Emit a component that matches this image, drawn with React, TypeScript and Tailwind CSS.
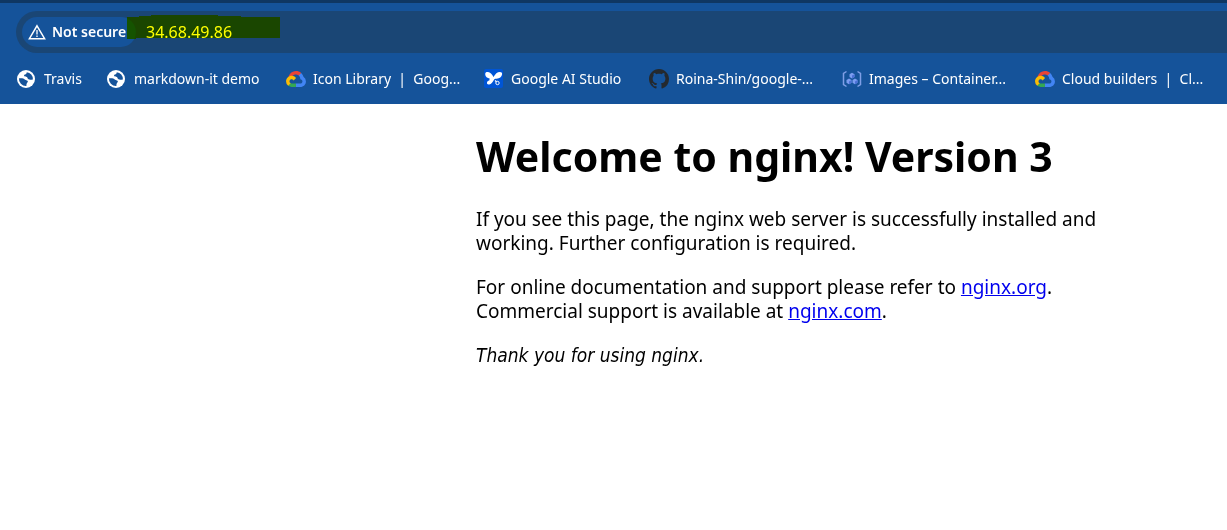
import type { ReactNode } from "react";

function GlobeIcon() {
  return (
    <svg viewBox="0 0 18 18" className="size-[18px] shrink-0" aria-hidden="true">
      <circle cx="9" cy="9" r="9" fill="#fff" />
      <path
        d="M2 8.2c1.6-.1 3.3-.1 4.2.3 1.500.7 2.200 1.700 3.600 1.900 1 .2 1.300.8.9 1.700-.3.700-1.400 1.100-1.300 3.900A7 7 0 0 1 2 8.200Z"
        fill="#15539a"
      />
      <path
        d="M9.800 2.200c-.2 1.300-.6 1.900-1.800 2.200-1 .2-1.200 1-.7 1.700.600.800 1.700.500 2.500 1 .900.600.700 1.700 1.700 2.200.9.500 2.400.400 4.400.100A7 7 0 0 0 9.800 2.200Z"
        fill="#15539a"
      />
    </svg>
  );
}

function CloudIcon() {
  return (
    <svg viewBox="0 0 256 206" className="h-4 w-5 shrink-0" aria-hidden="true">
      <path
        fill="#EA4335"
        d="m170.252 56.819 22.253-22.253 1.483-9.370C153.437-11.677 88.976-7.496 52.420 33.920 42.267 45.423 34.734 59.764 30.717 74.573l7.970-1.123 44.505-7.340 3.436-3.513c19.797-21.742 53.270-24.667 76.128-6.168l7.496.390Z"
      />
      <path
        fill="#4285F4"
        d="M224.205 73.918a100.249 100.249 0 0 0-30.217-48.722l-31.232 31.232a55.515 55.515 0 0 1 20.379 44.037v5.544c15.350 0 27.797 12.450 27.797 27.796 0 15.352-12.446 27.573-27.797 27.573h-55.671l-5.466 5.934v33.340l5.466 5.231h55.670c39.930.311 72.553-31.494 72.864-71.424a72.303 72.303 0 0 0-31.793-60.541"
      />
      <path
        fill="#34A853"
        d="M71.870 205.796h55.593V161.290H71.870a27.275 27.275 0 0 1-11.498-2.498l-7.887 2.420-22.409 22.253-1.952 7.574c12.567 9.489 27.996 14.825 43.746 14.757"
      />
      <path
        fill="#FBBC05"
        d="M71.870 61.425C31.940 61.664-.237 94.228.001 134.158a72.301 72.301 0 0 0 28.222 56.880l32.248-32.246c-13.990-6.322-20.208-22.786-13.887-36.776 6.320-13.990 22.786-20.208 36.775-13.888a27.796 27.796 0 0 1 13.887 13.888l32.248-32.248A72.224 72.224 0 0 0 71.870 61.425"
      />
    </svg>
  );
}

function StudioIcon() {
  return (
    <svg viewBox="0 0 19 19" className="size-[19px] shrink-0" aria-hidden="true">
      <rect width="19" height="19" rx="2" fill="#0055d6" />
      <path
        d="M1.200 5.200C1.100 3.400 2.500 2.900 4 3.100c2.200.300 4 2 5.500 4.900 1.800-3.100 3.800-5 6.400-5 1.500 0 2.400.900 2.200 2.300-.300 2.700-2.800 4.500-5.700 4.400-1.700 0-2 .400-2.700 1.500-1.300 2.200-2.300 4-4.500 4.300-1.500.200-2.500-.600-2.200-1.900.300-1.400 1.600-2 2.800-2.500-.500-.4-.5-1-.1-1.600C3.300 9.200 1.300 7.800 1.200 5.200Z"
        fill="#fff"
      />
      <circle cx="13.500" cy="14" r="1.700" fill="none" stroke="#fff" strokeWidth="1" />
      <path d="m11 11.500 1.500 1.200" stroke="#fff" strokeWidth="1.200" />
    </svg>
  );
}

function GithubIcon() {
  return (
    <svg viewBox="0 0 16 16" className="size-5 shrink-0" aria-hidden="true">
      <path
        fill="#24292e"
        d="M8 0C3.580 0 0 3.580 0 8c0 3.540 2.290 6.530 5.470 7.590.4.070.55-.17.55-.38 0-.19-.01-.82-.01-1.490-2.010.37-2.530-.49-2.690-.94-.09-.23-.48-.94-.82-1.130-.28-.15-.68-.52-.01-.53.63-.01 1.080.58 1.230.82.72 1.210 1.870.87 2.330.66.07-.52.28-.87.51-1.070-1.780-.2-3.640-.89-3.640-3.950 0-.87.31-1.590.82-2.150-.08-.2-.36-1.020.08-2.120 0 0 .67-.21 2.200.82.64-.18 1.320-.27 2-.27s1.360.09 2 .27c1.530-1.040 2.200-.82 2.200-.82.44 1.100.16 1.920.08 2.120.51.56.82 1.270.82 2.150 0 3.070-1.870 3.750-3.650 3.950.29.25.54.73.54 1.480 0 1.070-.01 1.930-.01 2.200 0 .21.15.46.55.38A8.010 8.010 0 0 0 16 8c0-4.420-3.580-8-8-8Z"
      />
    </svg>
  );
}

function RegistryIcon() {
  return (
    <svg viewBox="0 0 20 20" className="size-5 shrink-0" aria-hidden="true">
      <path
        d="M4.500 2.500 1.500 4.500v11l3 2M15.500 2.500l3 2v11l-3 2"
        fill="none"
        stroke="#7f9fe6"
        strokeWidth="1.500"
      />
      {[
        [10, 6.6],
        [7, 12.4],
        [13, 12.4],
      ].map(([x, y]) => (
        <g key={`${x}-${y}`}>
          <path d={`M${x} ${y - 2.8}l2.500 1.400v2.800l-2.500 1.400-2.500-1.400v-2.800z`} fill="#7b9df0" />
          <path d={`M${x} ${y}l2.500-1.400v2.800l-2.500 1.400z`} fill="#4a70d6" />
        </g>
      ))}
    </svg>
  );
}

function WarningIcon() {
  return (
    <svg viewBox="0 0 18 16" className="h-4 w-[18px] shrink-0" aria-hidden="true">
      <path d="M9 1.800 16.600 14.700H1.400Z" fill="none" stroke="#fff" strokeWidth="1.500" />
      <path d="M9 6v4.500M9 11.500v1.500" stroke="#fff" strokeWidth="1.300" />
    </svg>
  );
}

const bookmarks: { label: string; icon: ReactNode }[] = [
  { label: "Travis", icon: <GlobeIcon /> },
  { label: "markdown-it demo", icon: <GlobeIcon /> },
  { label: "Icon Library  |  Goog...", icon: <CloudIcon /> },
  { label: "Google AI Studio", icon: <StudioIcon /> },
  { label: "Roina-Shin/google-...", icon: <GithubIcon /> },
  { label: "Images – Container...", icon: <RegistryIcon /> },
  { label: "Cloud builders  |  Cl...", icon: <CloudIcon /> },
];

function BrowserBar() {
  return (
    <header className="overflow-hidden border-t-[3px] border-[#0f3763] bg-[#15539a] pt-2 text-white">
      <div className="relative ml-4 flex h-[42px] items-center rounded-l-full bg-[#1a4675] pl-1.5">
        <button
          type="button"
          className="flex h-[30px] w-[114px] shrink-0 items-center gap-1.5 rounded-full bg-[#15539a] pl-1.5 text-sm font-semibold whitespace-nowrap"
        >
          <WarningIcon />
          Not secure
        </button>
        <input
          aria-label="Address"
          defaultValue="34.68.49.86"
          className="ml-2.5 h-6 min-w-0 flex-1 bg-transparent text-base outline-none"
        />
        <svg
          viewBox="0 0 153 24"
          className="pointer-events-none absolute top-1 left-[111px] h-6 w-[153px] mix-blend-multiply"
          aria-hidden="true"
        >
          <path d="M0 2H12V1H24V0H91V1H114V2H153V23H9V24H0Z" fill="#ff0" />
        </svg>
      </div>
      <nav
        aria-label="Bookmarks"
        className="grid h-[51px] grid-cols-[90px_179px_198px_165px_193px_193px_auto] items-center pl-[17px] text-sm"
      >
        {bookmarks.map(({ label, icon }) => (
          <a key={label} href="#" className="flex items-center whitespace-pre">
            <span className="flex w-[27px] shrink-0">{icon}</span>
            {label}
          </a>
        ))}
      </nav>
    </header>
  );
}

export default function App() {
  return (
    <div className="min-h-screen bg-white font-['Noto_Sans','Open_Sans',sans-serif]">
      <BrowserBar />
      <main className="ml-[476px] max-w-[700px] pt-7 text-[19px] leading-6 text-black">
        <h1 className="mb-[26px] text-[41px] leading-[49px] font-bold">Welcome to nginx! Version 3</h1>
        <p className="mb-5">
          If you see this page, the nginx web server is successfully installed and
          <br />
          working. Further configuration is required.
        </p>
        <p className="mb-5">
          For online documentation and support please refer to{" "}
          <a href="http://nginx.org/" className="text-[#0000ee] underline">
            nginx.org
          </a>
          .<br />
          Commercial support is available at{" "}
          <a href="http://nginx.com/" className="text-[#0000ee] underline">
            nginx.com
          </a>
          .
        </p>
        <p className="font-['DejaVu_Sans_Condensed','Noto_Sans',sans-serif]">
          <em>Thank you for using nginx.</em>
        </p>
      </main>
    </div>
  );
}
